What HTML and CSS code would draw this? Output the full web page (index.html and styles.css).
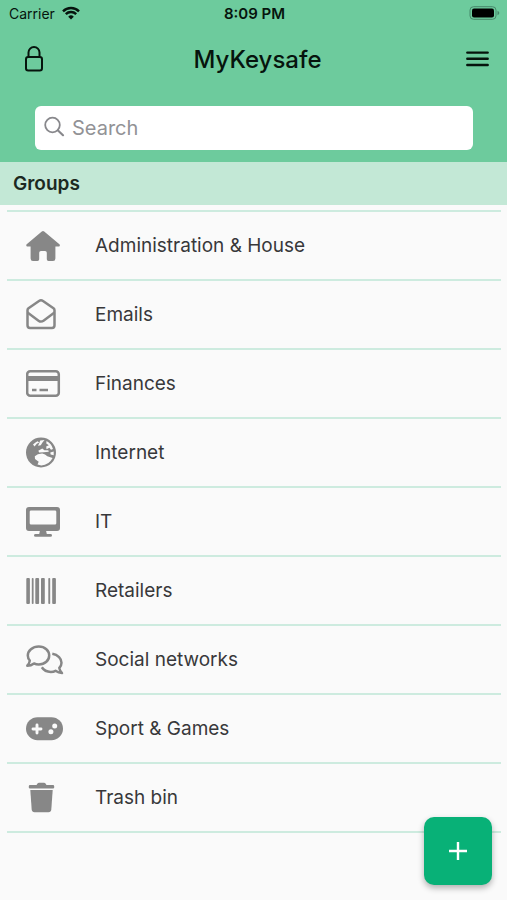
FILE: index.html
```html
<!DOCTYPE html>
<html lang="en">
<head>
    <meta charset="UTF-8">
    <meta name="viewport" content="width=device-width, initial-scale=1.0">
    <title>MyKeysafe</title>
    <link rel="stylesheet" href="styles.css">
</head>
<body>
    <header class="header">
        <div class="status-bar">
            <div class="carrier">
                <span>Carrier</span>
                <svg width="18" height="14" viewBox="0 0 18 14" fill="none" stroke="#06140d" stroke-width="2.4">
                    <path d="M1 5.3a11.3 11.3 0 0 1 16 0"/>
                    <path d="M3.8 8.2a7.4 7.4 0 0 1 10.4 0"/>
                    <path d="M9 13.6l-2.8-2.9a4 4 0 0 1 5.600 0z" fill="#06140d" stroke="none"/>
                </svg>
            </div>
            <time class="clock">8:09 PM</time>
            <svg class="battery" width="31" height="14" viewBox="0 0 31 14">
                <rect x="1" y="0.7" width="26" height="12.6" rx="3.5" fill="none" stroke="#47886a"/>
                <rect x="3" y="2.5" width="22" height="9" rx="2" fill="#000"/>
                <path d="M28.5 4.8q1.8.7 1.8 2.2t-1.8 2.2z" fill="#47886a"/>
            </svg>
        </div>
        <div class="title-bar">
            <button type="button" class="lock-button" aria-label="Lock">
                <svg width="20" height="28" viewBox="0 0 20 28" fill="none" stroke="#06140d" stroke-width="2">
                    <rect x="2" y="12" width="16" height="13.5" rx="2.2"/>
                    <path d="M4.5 12V7.500a5.500 5.500 0 0 1 11 0V12"/>
                </svg>
            </button>
            <h1>MyKeysafe</h1>
            <button type="button" class="menu-button" aria-label="Menu">
                <svg width="23" height="18" viewBox="0 0 23 18" stroke="#06140d" stroke-width="2.4" stroke-linecap="round">
                    <path d="M1.3 2.600h20.400M1.300 8.800h20.400M1.300 15h20.400"/>
                </svg>
            </button>
        </div>
        <form class="search" role="search">
            <label for="search" aria-label="Search">
                <svg width="22" height="24" viewBox="0 0 22 24" fill="none" stroke="#88888c" stroke-width="1.8" stroke-linecap="round">
                    <circle cx="8.500" cy="9" r="7.300"/>
                    <path d="M14 14.500l5 4.700" stroke-width="2.200"/>
                </svg>
            </label>
            <input type="text" id="search" placeholder="Search">
        </form>
    </header>
    <main>
        <h2>Groups</h2>
        <ul class="groups">
            <li>
                <a href="#administration">
                    <svg class="icon" viewBox="0 0 38 32">
                        <path d="M15.8 1.4Q17 .4 18.2 1.4L33.4 14.3Q34.5 15.3 33.3 16.5H29.4V28.5Q29.4 31 27 31H22.5Q20.8 31 20.8 29.3V22.8Q20.8 21 19 21H15Q13.2 21 13.2 22.8V29.3Q13.2 31 11.5 31H7Q4.6 31 4.6 28.5V16.5H.9Q-.4 15.4.7 14.3Z"/>
                    </svg>
                    <span>Administration &amp; House</span>
                </a>
            </li>
            <li>
                <a href="#emails">
                    <svg class="icon line" viewBox="0 0 38 32">
                        <path d="M1.5 11.3Q1.5 10 2.5 9.2L13 2Q15 .6 17 2L27.5 9.2Q28.5 10 28.5 11.3V26.3Q28.5 29 26 29H4Q1.500 29 1.500 26.300Z"/>
                        <path d="M1.5 13.500L12.500 21.700Q15 23.500 17.500 21.700L28.500 13.500"/>
                    </svg>
                    <span>Emails</span>
                </a>
            </li>
            <li>
                <a href="#finances">
                    <svg class="icon line" viewBox="0 0 38 32">
                        <rect x="1.2" y="3.2" width="31.6" height="24.6" rx="3"/>
                        <path d="M1 10.5h32" stroke-width="5"/>
                        <path d="M6 22h4.5M13.5 22H22" stroke-width="2.6"/>
                    </svg>
                    <span>Finances</span>
                </a>
            </li>
            <li>
                <a href="#internet">
                    <svg class="icon" viewBox="0 0 38 32">
                        <circle cx="15" cy="15.5" r="15"/>
                        <g fill="#fafafa">
                            <path d="M7 7.6Q9 5.3 11.5 4.2L13.2 5.4L10.8 6.8L8.5 9.5Z"/>
                            <path d="M14.2 3.4L18.5 3.1L16.3 5.8L14.8 8.2L12 8.8L13.2 6.3Z"/>
                            <path d="M20.5 4Q25.5 6.5 27 12L25 12.7L23.4 10.8L20.5 12.2L20.2 9.5L22.8 8.2L20.3 6.4Z"/>
                            <path d="M12.3 13.8L16.3 11.4L18.4 13.2L22.3 13.2L22.8 14.8L17.5 15.300L13.200 15.500Z"/>
                            <path d="M8.800 19.200Q11.500 16.400 16.300 16.500Q19.300 17.100 21.300 19.300L26.600 21Q23 28 15.300 28.400L11.500 27.600L12.700 24.800L9 22Z"/>
                            <path d="M24.300 15.500L27.700 14.500V18.200L24.700 17.500Z"/>
                        </g>
                    </svg>
                    <span>Internet</span>
                </a>
            </li>
            <li>
                <a href="#it">
                    <svg class="icon" viewBox="0 0 38 32">
                        <path fill-rule="evenodd" d="M3 1h28q3 0 3 3v18q0 3-3 3H3q-3 0-3-3V4q0-3 3-3ZM5 4.5Q3.7 4.5 3.7 5.8V17.2Q3.7 18.5 5 18.5H29Q30.3 18.5 30.3 17.2V5.8Q30.3 4.5 29 4.5Z"/>
                        <path d="M14 24.5h6l.8 3.5H24.5q1.5 0 1.5 1.4t-1.5 1.4h-15Q8 30.8 8 29.4T9.5 28h3.7Z"/>
                    </svg>
                    <span>IT</span>
                </a>
            </li>
            <li>
                <a href="#retailers">
                    <svg class="icon" viewBox="0 0 38 32">
                        <rect x="0.3" y="3" width="3.6" height="26" rx="1"/>
                        <rect x="5.8" y="3" width="1.8" height="26" rx="0.8"/>
                        <rect x="9.3" y="3" width="3.8" height="26" rx="1"/>
                        <rect x="15" y="3" width="3.8" height="26" rx="1"/>
                        <rect x="22.3" y="3" width="1.9" height="26" rx="0.8"/>
                        <rect x="26.2" y="3" width="3.7" height="26" rx="1"/>
                    </svg>
                    <span>Retailers</span>
                </a>
            </li>
            <li>
                <a href="#social">
                    <svg class="icon line" viewBox="0 0 38 32">
                        <path d="M12.8 2.500C19 2.500 23.200 6.700 23.200 11.500S19 20.500 12.800 20.500Q10 20.500 8 19.400Q5 21.700 1.300 21.700Q3.700 19 3.800 16.500Q1.800 14.300 1.800 11.500C1.800 6.700 6.500 2.500 12.800 2.500Z"/>
                        <path d="M26.300 9.800C32 10.700 35.500 14.500 35.500 18.700Q35.500 21.800 33.300 24Q33.500 26.300 36 29Q32.500 29 29.500 26.800Q27.500 27.900 24.800 27.900Q18.800 27.900 15.800 23.300"/>
                    </svg>
                    <span>Social networks</span>
                </a>
            </li>
            <li>
                <a href="#games">
                    <svg class="icon" viewBox="0 0 38 32">
                        <rect x="0" y="4.2" width="37" height="23" rx="11.5"/>
                        <path d="M11 12v8M7 16h8" stroke="#fafafa" stroke-width="2.9" stroke-linecap="round"/>
                        <circle cx="24.9" cy="18.700" r="2.500" fill="#fafafa"/>
                        <circle cx="28.700" cy="13" r="2.500" fill="#fafafa"/>
                    </svg>
                    <span>Sport &amp; Games</span>
                </a>
            </li>
            <li>
                <a href="#trash">
                    <svg class="icon" viewBox="0 0 38 32">
                        <path d="M4 3h6.500l1-1.500q.5-.8 1.500-.8h5q1 0 1.500.8l1 1.500H27q1.200 0 1.200 1.200v1.400q0 1-1.200 1H4q-1.200 0-1.200-1V4.200Q2.800 3 4 3Z"/>
                        <path d="M4.300 8H26.700L25.300 27.500Q25 30.300 22.500 30.300H8.500Q6 30.300 5.700 27.500Z"/>
                    </svg>
                    <span>Trash bin</span>
                </a>
            </li>
        </ul>
    </main>
    <button type="button" class="add" aria-label="Add group">
        <svg width="20" height="20" viewBox="0 0 20 20" stroke="#fff" stroke-width="2.4">
            <path d="M10 1v18M1 10h18"/>
        </svg>
    </button>
</body>
</html>
```
FILE: styles.css
```css
* {
    box-sizing: border-box;
}
body {
    margin: 0;
    min-height: 100vh;
    background-color: #fafafa;
    color: #333;
    font-family: Inter, "Liberation Sans", sans-serif;
}
h1, h2 {
    margin: 0;
    font-weight: 500;
}
button {
    border: none;
    cursor: pointer;
}
svg {
    display: block;
}
.header {
    background-color: #6dcb9d;
    color: #06140d;
    padding-bottom: 12px;
}
.status-bar {
    display: grid;
    grid-template-columns: 1fr auto 1fr;
    align-items: center;
    height: 26px;
    padding: 0 7px 0 9px;
    font-size: 14px;
}
.carrier {
    display: flex;
    align-items: center;
    gap: 7px;
}
.clock {
    font-size: 15px;
    font-weight: 600;
}
.battery {
    justify-self: end;
}
.title-bar {
    display: flex;
    justify-content: space-between;
    align-items: center;
    height: 66px;
    padding: 0 18px 0 19px;
}
.title-bar h1 {
    font-size: 24px;
}
.lock-button, .menu-button {
    padding: 0;
    background: none;
}
.lock-button {
    padding: 0 5px;
}
.search {
    display: flex;
    align-items: center;
    gap: 6px;
    height: 44px;
    margin: 14px 34px 0 35px;
    padding: 0 9px;
    background-color: #fff;
    border-radius: 6px;
}
.search input {
    flex: 1;
    min-width: 0;
    padding: 0;
    border: none;
    outline: none;
    background: none;
    color: #333;
    font-family: inherit;
    font-size: 20px;
}
.search input::placeholder {
    color: #929296;
    opacity: 1;
}
h2 {
    padding: 0 13px;
    background-color: #c3e8d6;
    color: #1c2922;
    font-size: 19px;
    font-weight: 600;
    line-height: 43px;
}
.groups {
    margin: 0;
    padding: 5px 6px 0 7px;
    list-style: none;
}
.groups li {
    border-top: 2px solid #cdebdf;
    height: 69px;
}
.groups li:last-child {
    height: 71px;
    border-bottom: 2px solid #cdebdf;
}
.groups a {
    display: flex;
    align-items: center;
    gap: 31px;
    height: 67px;
    padding-left: 19px;
    color: #38383a;
    font-size: 19px;
    text-decoration: none;
}
.icon {
    width: 38px;
    height: 32px;
    fill: #878787;
}
.icon.line {
    fill: none;
    stroke: #878787;
    stroke-width: 2.5;
    stroke-linejoin: round;
}
.add {
    position: fixed;
    right: 15px;
    bottom: 15px;
    display: flex;
    justify-content: center;
    align-items: center;
    width: 68px;
    height: 68px;
    padding: 0;
    background-color: #08b177;
    border-radius: 10px;
    box-shadow: 0 3px 6px rgba(0,0,0,0.3);
}
```
